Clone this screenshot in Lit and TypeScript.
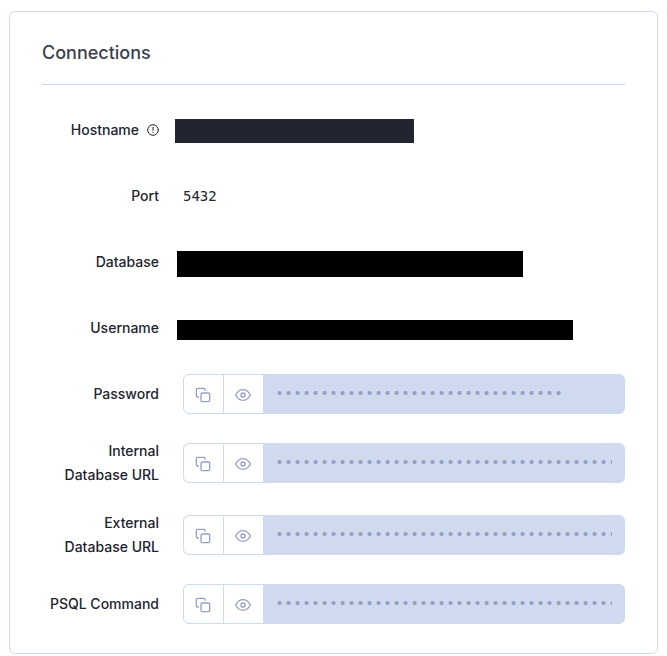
import { LitElement, html, css, svg } from "lit";
import { customElement, property, state } from "lit/decorators.js";

const copyIcon = svg`<rect x="9" y="9" width="13" height="13" rx="2"></rect><path d="M5 15H4a2 2 0 0 1-2-2V4a2 2 0 0 1 2-2h9a2 2 0 0 1 2 2v1"></path>`;
const eyeIcon = svg`<path d="M1 12s4-8 11-8 11 8 11 8-4 8-11 8-11-8-11-8z"></path><circle cx="12" cy="12" r="3"></circle>`;

/* Copy and reveal buttons joined to a masked value. */
@customElement("secret-field")
export class SecretField extends LitElement {
  @property() label = "";
  @property({ type: Number }) length = 32;
  @state() private revealed = false;

  static styles = css`
    :host {
      display: block;
      min-width: 0;
    }
    .group {
      display: flex;
      height: 38px;
      border: 1px solid #cfdaee;
      border-radius: 6px;
      overflow: hidden;
      background: #cfdaee;
    }
    .action {
      flex: none;
      display: block;
      padding: 12px 12px 10px 11px;
      border: 0;
      background: #fff;
      color: #959fc6;
      cursor: pointer;
    }
    .action + .action {
      margin-left: 1px;
    }
    .icon {
      display: block;
      width: 16px;
      height: 16px;
      fill: none;
      stroke: currentColor;
      stroke-width: 2;
      stroke-linecap: round;
      stroke-linejoin: round;
    }
    .value {
      flex: 1;
      min-width: 0;
      box-sizing: border-box;
      padding: 2px 12px 0;
      border: 0;
      background: #cfdaee;
      color: #959fc6;
      font: 15px/24px "Liberation Mono", monospace;
      outline: none;
    }
  `;

  render() {
    const value = "x".repeat(this.length);
    return html`<div class="group">
      <button class="action" type="button" aria-label="Copy ${this.label}"
        @click=${() => navigator.clipboard?.writeText(value)}>
        <svg class="icon" viewBox="0 0 24 24" aria-hidden="true">${copyIcon}</svg>
      </button>
      <button class="action" type="button" aria-label="Show ${this.label}"
        @click=${() => (this.revealed = !this.revealed)}>
        <svg class="icon" viewBox="0 0 24 24" aria-hidden="true">${eyeIcon}</svg>
      </button>
      <input class="value" type=${this.revealed ? "text" : "password"} readonly
        aria-label=${this.label} .value=${value} />
    </div>`;
  }
}

const redacted = [
  { label: "Database", width: 346, height: 26 },
  { label: "Username", width: 396, height: 20 },
];

@customElement("app-root")
export class AppRoot extends LitElement {
  static styles = css`
    :host {
      display: block;
      padding: 11px 9px 2px;
      background: #fff;
      color: #22252f;
      font: 500 14px/24px Inter, "Liberation Sans", sans-serif;
    }
    .card {
      padding: 28px 32px;
      border: 1px solid #d0daed;
      border-radius: 6px;
    }
    .title {
      margin: 0;
      padding-bottom: 18px;
      border-bottom: 1px solid #cbd8ed;
      color: #3b3e4e;
      font-size: 18px;
      font-weight: 500;
      line-height: 26px;
    }
    .rows {
      display: grid;
      gap: 24px;
      margin: 24px 0 0;
    }
    .row {
      display: grid;
      grid-template-columns: 117px minmax(0, 1fr);
      column-gap: 24px;
      align-items: center;
      min-height: 42px;
    }
    .name {
      display: flex;
      justify-content: flex-end;
      align-items: center;
      gap: 8px;
      text-align: right;
    }
    .data {
      margin: 0;
    }
    .code {
      font: 14px/24px "DejaVu Sans Mono", monospace;
    }
    .mask {
      max-width: 100%;
      margin: 4px 0 0 -6px;
      background: #000;
    }
    .slate {
      margin: 2px 0 0 -8px;
      background: #22252f;
    }
    .info {
      width: 12px;
      height: 12px;
      fill: none;
      stroke: currentColor;
      stroke-linecap: round;
    }
  `;

  private secret(label: string, length: number, text: unknown = label) {
    return html`<div class="row">
      <dt class="name"><span>${text}</span></dt>
      <dd class="data"><secret-field label=${label} .length=${length}></secret-field></dd>
    </div>`;
  }

  render() {
    return html`<section class="card">
      <h2 class="title">Connections</h2>
      <dl class="rows">
        <div class="row">
          <dt class="name">
            <span>Hostname</span>
            <svg class="info" viewBox="0 0 12 12" aria-hidden="true">
              <circle cx="6" cy="6" r="5.3"></circle>
              <path d="M6 3.4v3M6 8.4v.1"></path>
            </svg>
          </dt>
          <dd class="data"><div class="mask slate" style="width:239px;height:24px"></div></dd>
        </div>
        <div class="row">
          <dt class="name">Port</dt>
          <dd class="data code">5432</dd>
        </div>
        ${redacted.map(
          (r) => html`<div class="row">
            <dt class="name">${r.label}</dt>
            <dd class="data"><div class="mask" style="width:${r.width}px;height:${r.height}px"></div></dd>
          </div>`
        )}
        ${this.secret("Password", 32)}
        ${this.secret("Internal Database URL", 90, html`Internal<br />Database URL`)}
        ${this.secret("External Database URL", 120, html`External<br />Database URL`)}
        ${this.secret("PSQL Command", 140)}
      </dl>
    </section>`;
  }
}
